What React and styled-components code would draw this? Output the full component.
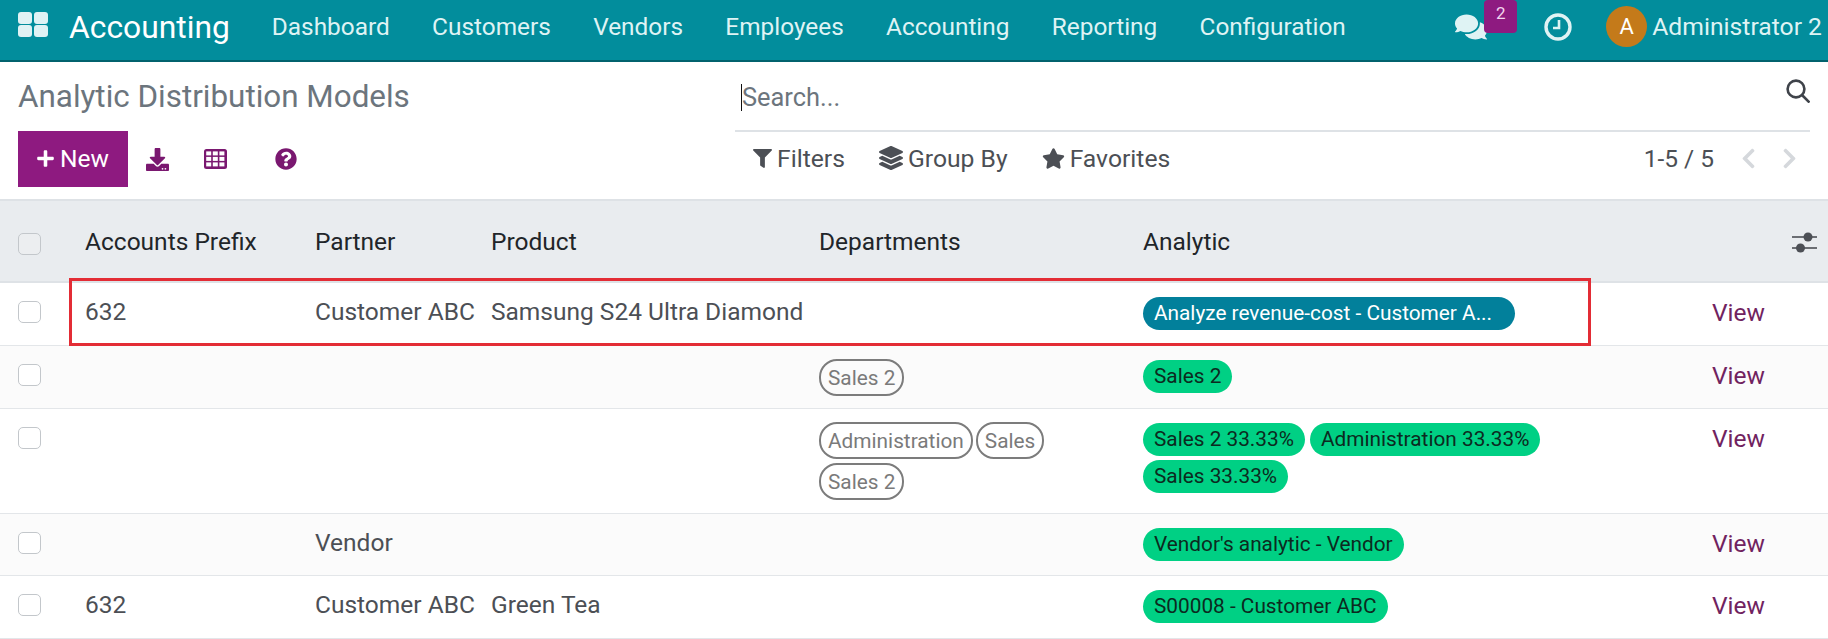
import styled, { createGlobalStyle } from 'styled-components';
import { FaPlus, FaDownload, FaQuestionCircle, FaComments, FaFilter, FaLayerGroup, FaStar, FaChevronLeft, FaChevronRight } from 'react-icons/fa';

const menu = ['Dashboard', 'Customers', 'Vendors', 'Employees', 'Accounting', 'Reporting', 'Configuration'];

const rows = [
  { prefix: '632', partner: 'Customer ABC', product: 'Samsung S24 Ultra Diamond', departments: [], analytic: ['Analyze revenue-cost - Customer A...'], blue: true, height: 63 },
  { departments: ['Sales 2'], analytic: ['Sales 2'], striped: true, height: 63 },
  { departments: ['Administration', 'Sales', 'Sales 2'], analytic: ['Sales 2 33.33%', 'Administration 33.33%', 'Sales 33.33%'], height: 105 },
  { partner: 'Vendor', departments: [], analytic: ["Vendor's analytic - Vendor"], striped: true, height: 62 },
  { prefix: '632', partner: 'Customer ABC', product: 'Green Tea', departments: [], analytic: ['S00008 - Customer ABC'], height: 63 },
];

function ClockIcon() {
  return (
    <svg width="30" height="30" viewBox="0 0 30 30" fill="none" stroke="currentColor">
      <circle cx="15" cy="15" r="12" strokeWidth="3.4" />
      <path d="M16 8v8H10" strokeWidth="2.6" />
    </svg>
  );
}

function SearchIcon() {
  return (
    <svg width="24" height="24" viewBox="0 0 24 24" fill="none" stroke="currentColor" strokeWidth="2.6">
      <circle cx="10" cy="10" r="8.4" />
      <path d="M16 16L23.5 23.5" />
    </svg>
  );
}

function TableIcon() {
  return (
    <svg width="23" height="20" viewBox="0 0 23 20">
      <rect width="23" height="20" rx="2.5" fill="currentColor" />
      {[0, 1, 2].map(c => [0, 1, 2].map(r => (
        <rect key={`${c}${r}`} x={2.2 + c * 6.6} y={2.4 + r * 5.5} width="5" height="4" fill="#fff" />
      )))}
    </svg>
  );
}

function SlidersIcon() {
  return (
    <svg width="25" height="22" viewBox="0 0 25 22" fill="currentColor">
      <rect y="4.2" width="25" height="1.6" />
      <rect y="15.2" width="25" height="1.6" />
      <circle cx="16" cy="5" r="4.5" />
      <circle cx="8.5" cy="16" r="4.5" />
    </svg>
  );
}

function App() {
  return (
    <Page>
      <GlobalStyle />
      <Navbar>
        <AppsIcon><i /><i /><i /><i /></AppsIcon>
        <Brand>Accounting</Brand>
        <Menu>
          {menu.map(item => <MenuItem key={item}>{item}</MenuItem>)}
        </Menu>
        <Systray>
          <Messages>
            <FaComments size={32} />
            <Counter>2</Counter>
          </Messages>
          <Activity><ClockIcon /></Activity>
          <Avatar>A</Avatar>
          <UserName>Administrator 2</UserName>
        </Systray>
      </Navbar>

      <Control>
        <ControlLeft>
          <Title>Analytic Distribution Models</Title>
          <Buttons>
            <NewButton><FaPlus size={19} />New</NewButton>
            <IconButton $left={18}><FaDownload size={23} /></IconButton>
            <IconButton $left={35}><TableIcon /></IconButton>
            <IconButton $left={48}><FaQuestionCircle size={22} /></IconButton>
          </Buttons>
        </ControlLeft>
        <ControlRight>
          <SearchBar>
            <SearchText>Search...</SearchText>
            <SearchIcon />
          </SearchBar>
          <SearchTools>
            <Tool><FaFilter size={19} />Filters</Tool>
            <Tool><FaLayerGroup size={24} />Group By</Tool>
            <Tool><FaStar size={23} />Favorites</Tool>
            <Pager>
              <span>1-5 / 5</span>
              <PagerArrows>
                <FaChevronLeft size={23} />
                <FaChevronRight size={23} />
              </PagerArrows>
            </Pager>
          </SearchTools>
        </ControlRight>
      </Control>

      <Table>
        <colgroup>
          <col style={{ width: 73 }} />
          <col style={{ width: 230 }} />
          <col style={{ width: 176 }} />
          <col style={{ width: 328 }} />
          <col style={{ width: 324 }} />
          <col style={{ width: 569 }} />
          <col />
        </colgroup>
        <thead>
          <tr>
            <Th><Checkbox $head /></Th>
            <Th>Accounts Prefix</Th>
            <Th>Partner</Th>
            <Th>Product</Th>
            <Th>Departments</Th>
            <Th>Analytic</Th>
            <Th><SliderBox><SlidersIcon /></SliderBox></Th>
          </tr>
        </thead>
        <tbody>
          {rows.map((row, i) => (
            <Row key={i} $striped={row.striped} $height={row.height}>
              <Td><Checkbox /></Td>
              <Td>{row.prefix}</Td>
              <Td>{row.partner}</Td>
              <Td>{row.product}</Td>
              <Td>
                <Tags $gap={3} $rowGap={5} $max={295}>
                  {row.departments.map((d, j) => <DepartmentTag key={j}>{d}</DepartmentTag>)}
                </Tags>
              </Td>
              <Td>
                <Tags $gap={5} $rowGap={4} $max={420}>
                  {row.analytic.map((a, j) => <AnalyticTag key={j} $blue={row.blue}>{a}</AnalyticTag>)}
                </Tags>
              </Td>
              <Td><ViewLink>View</ViewLink></Td>
            </Row>
          ))}
        </tbody>
      </Table>

      <Highlight />
    </Page>
  );
}

export default App;

const GlobalStyle = createGlobalStyle`
  html, body {
    margin: 0;
    background: #fff;
  }
  body {
    font-family: Roboto, "Liberation Sans", sans-serif;
    color: #4c4f55;
    overflow: hidden;
  }
`;

const Page = styled.div`
  position: relative;
  width: 1828px;
  height: 639px;
  overflow: hidden;
`;

const Navbar = styled.header`
  display: flex;
  align-items: center;
  box-sizing: border-box;
  height: 62px;
  padding: 0 0 7px 18px;
  background: #028d9c;
  border-bottom: 2px solid #01626d;
  color: #dff3f4;
`;

const AppsIcon = styled.div`
  display: grid;
  grid-template-columns: 14px 14px;
  grid-auto-rows: 12px;
  gap: 1px 2px;
  margin-top: -4px;
  i {
    background: #e0f2f4;
    border-radius: 3px;
  }
`;

const Brand = styled.div`
  margin-left: 21px;
  font-size: 31.8px;
  color: #fff;
`;

const Menu = styled.nav`
  display: flex;
  gap: 42.3px;
  margin-left: 42px;
`;

const MenuItem = styled.a`
  font-size: 24.4px;
`;

const Systray = styled.div`
  display: flex;
  align-items: center;
  margin-left: auto;
  padding-right: 6px;
`;

const Messages = styled.div`
  position: relative;
  display: flex;
  width: 32px;
  margin-right: 56px;
`;

const Counter = styled.span`
  position: absolute;
  left: 29px;
  top: -11px;
  width: 33px;
  height: 33px;
  border-radius: 4px;
  background: #8e1a80;
  color: #f2d4ee;
  font-size: 17px;
  text-align: center;
  line-height: 26px;
`;

const Activity = styled.div`
  display: flex;
  margin-right: 33px;
`;

const Avatar = styled.div`
  width: 41px;
  height: 41px;
  border-radius: 50%;
  background: #c47a1a;
  color: #fff;
  font-size: 22px;
  line-height: 41px;
  text-align: center;
`;

const UserName = styled.span`
  margin-left: 5px;
  font-size: 24.7px;
`;

const Control = styled.section`
  display: flex;
  height: 137px;
  border-bottom: 2px solid #dee2e6;
`;

const ControlLeft = styled.div`
  width: 717px;
  padding-left: 18px;
`;

const Title = styled.h1`
  margin: 16px 0 0;
  font-size: 31.4px;
  font-weight: 400;
  line-height: 38px;
  color: #6c757d;
`;

const Buttons = styled.div`
  display: flex;
  align-items: center;
  margin-top: 15px;
`;

const NewButton = styled.button`
  display: flex;
  align-items: center;
  gap: 5px;
  width: 110px;
  height: 56px;
  padding: 0 0 2px 18px;
  border: 0;
  background: #8e1a80;
  color: #fff;
  font: 400 24.5px Roboto, sans-serif;
`;

const IconButton = styled.span`
  display: flex;
  color: #7a1870;
  margin-left: ${props => props.$left}px;
`;

const ControlRight = styled.div`
  flex: 1;
  min-width: 0;
  padding-right: 18px;
`;

const SearchBar = styled.div`
  display: flex;
  align-items: center;
  justify-content: space-between;
  box-sizing: border-box;
  height: 70px;
  padding: 3px 0 0 6px;
  border-bottom: 2px solid #dee2e6;
  color: #3f434a;
  svg {
    margin-top: -13px;
  }
`;

const SearchText = styled.span`
  border-left: 1px solid #111;
  font-size: 25.4px;
  line-height: 27px;
  color: #6c757d;
`;

const SearchTools = styled.div`
  display: flex;
  align-items: center;
  gap: 34px;
  height: 52px;
  padding: 0 9px 0 18px;
`;

const Tool = styled.span`
  display: flex;
  align-items: center;
  gap: 5px;
  font-size: 24.7px;
  color: #4c4f55;
`;

const Pager = styled.div`
  display: flex;
  align-items: center;
  margin-left: auto;
  font-size: 24.5px;
`;

const PagerArrows = styled.div`
  display: flex;
  gap: 18px;
  margin-left: 23px;
  color: #d5d8dc;
`;

const Table = styled.table`
  width: 1828px;
  table-layout: fixed;
  border-collapse: collapse;
  font-size: 24.5px;
`;

const Th = styled.th`
  height: 81px;
  padding: 0 0 0 12px;
  background: #e9ecef;
  border-bottom: 2px solid #dee2e6;
  font-weight: 400;
  text-align: left;
  color: #212529;
  white-space: nowrap;
  box-sizing: border-box;
`;

const SliderBox = styled.span`
  display: flex;
  justify-content: flex-end;
  padding-right: 11px;
  margin-top: 3px;
  color: #4c4f55;
`;

const Row = styled.tr`
  height: ${props => props.$height}px;
  background: ${props => props.$striped ? '#fbfbfb' : '#fff'};
  border-bottom: 1px solid #e3e6e9;
`;

const Td = styled.td`
  padding: 14px 0 0 12px;
  vertical-align: top;
  white-space: nowrap;
  color: #4c4f55;
`;

const Checkbox = styled.span`
  display: block;
  width: 23px;
  height: 22px;
  margin: ${props => props.$head ? '6px 0 0 6px' : '4px 0 0 6px'};
  border: 1px solid #c3c7cb;
  border-radius: 5px;
  background: ${props => props.$head ? '#eceef0' : '#fff'};
  box-sizing: border-box;
`;

const Tags = styled.div`
  display: flex;
  flex-wrap: wrap;
  gap: ${props => props.$rowGap}px ${props => props.$gap}px;
  max-width: ${props => props.$max}px;
`;

const DepartmentTag = styled.span`
  height: 37px;
  margin-top: -1px;
  padding: 0 7px;
  border: 2px solid #7c7c7c;
  border-radius: 18px;
  font-size: 20.8px;
  line-height: 34px;
  color: #7a7a7a;
  box-sizing: border-box;
`;

const AnalyticTag = styled.span`
  height: 33px;
  padding: ${props => props.$blue ? '0 23px 0 11px' : '0 11px'};
  border-radius: 17px;
  font-size: 20.8px;
  line-height: 33px;
  background: ${props => props.$blue ? '#02809b' : '#00d084'};
  color: ${props => props.$blue ? '#fff' : '#0c2a20'};
`;

const ViewLink = styled.a`
  display: block;
  margin-top: 1px;
  color: #71235f;
`;

const Highlight = styled.div`
  position: absolute;
  left: 69px;
  top: 278px;
  width: 1522px;
  height: 68px;
  border: 3px solid #e32c35;
  box-sizing: border-box;
  pointer-events: none;
`;
